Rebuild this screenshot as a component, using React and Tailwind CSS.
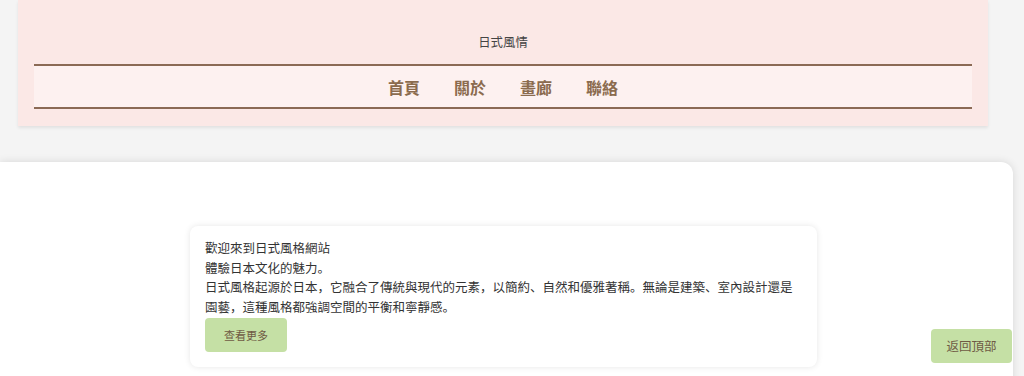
export default function App() {
  const navItems = ['首頁', '關於', '畫廊', '聯絡'];

  return (
    <div className="min-h-screen bg-[#f4f4f4] font-['Noto_Sans_CJK_SC','Noto_Sans',sans-serif] text-[#333]">
      {/* Header */}
      <header className="ml-[18px] mr-[36px] bg-[#fbe8e6] pt-[32px] pb-[17px] shadow-[0_2px_3px_rgba(0,0,0,0.08)]">
        <h1 className="text-center text-[12.4px] leading-[20px] text-[#444]">日式風情</h1>
        <nav className="mx-[16px] mt-[12px] flex h-[45px] items-center justify-center gap-[34px] border-y-2 border-[#8b6a55] bg-[#fdf1f0]">
          {navItems.map((item) => (
            <a key={item} className="text-[16px] font-bold text-[#8b6b4e]">
              {item}
            </a>
          ))}
        </nav>
      </header>

      {/* Main */}
      <main className="mt-[36px] mr-[11px] h-[240px] rounded-xl rounded-tl-none bg-white pt-[64px] shadow-[0_0_8px_rgba(0,0,0,0.12)]">
        <section className="ml-[190px] w-[627px] rounded-lg bg-white pl-[15px] pr-[22px] pt-[12px] pb-[15px] shadow-[0_0_6px_rgba(0,0,0,0.1)]">
          <div className="text-[12.5px] leading-[19.5px] text-[#333]">
            <p>歡迎來到日式風格網站</p>
            <p>體驗日本文化的魅力。</p>
            <p>
              日式風格起源於日本，它融合了傳統與現代的元素，以簡約、自然和優雅著稱。無論是建築、室內設計還是園藝，這種風格都強調空間的平衡和寧靜感。
            </p>
          </div>
          <button className="mt-[2px] h-[34px] w-[82px] rounded bg-[#c5e0a5] text-[11px] text-[#6f5a44]">
            查看更多
          </button>
        </section>
      </main>

      {/* Back to top */}
      <button className="fixed right-[12px] bottom-[13px] h-[34px] w-[81px] rounded bg-[#c5e0a5] text-[12.5px] text-[#6f5a44]">
        返回頂部
      </button>
    </div>
  );
}
